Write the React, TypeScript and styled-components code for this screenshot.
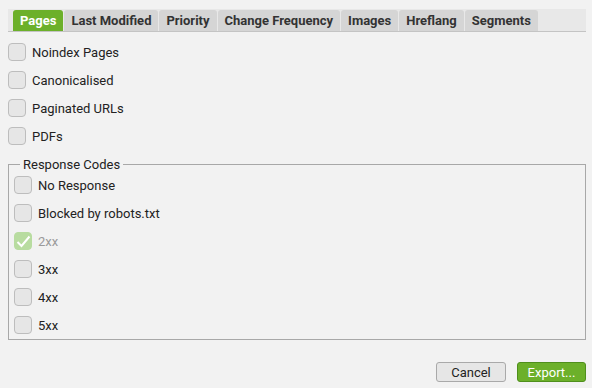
import React from "react";
import styled, { createGlobalStyle } from "styled-components";

const Global = createGlobalStyle`
  html, body { margin: 0; padding: 0; background: #f2f2f2; }
  body { font-family: Roboto, "Liberation Sans", sans-serif; font-size: 13px; color: #222; }
  * { box-sizing: border-box; }
`;

const Page = styled.div`
  width: 592px;
  height: 388px;
  padding: 9px 6px 0 8px;
  display: flex;
  flex-direction: column;
`;

const TabStrip = styled.div`
  height: 24px;
  background: #e8e8e8;
  border-bottom: 1px solid #c4c4c4;
  display: flex;
  align-items: flex-end;
  gap: 1px;
  padding-left: 5px;
`;

const Tab = styled.div<{ $active?: boolean }>`
  height: 21px;
  padding: 0 7px;
  display: flex;
  align-items: center;
  font-weight: 700;
  font-size: 13px;
  border-radius: 3px 3px 0 0;
  background: ${(p) => (p.$active ? "#6cb02a" : "#d5d5d5")};
  color: ${(p) => (p.$active ? "#fff" : "#333")};
`;

const List = styled.div`
  display: flex;
  flex-direction: column;
  padding-top: 6px;
`;

const Row = styled.label<{ $disabled?: boolean }>`
  height: 28px;
  display: flex;
  align-items: center;
  gap: 6px;
  font-size: 13px;
  color: ${(p) => (p.$disabled ? "#9a9a9a" : "#222")};
`;

const Box = styled.span<{ $checked?: boolean }>`
  width: 18px;
  height: 18px;
  border-radius: 4px;
  border: 1px solid ${(p) => (p.$checked ? "#b8dca0" : "#bdbdbd")};
  background: ${(p) => (p.$checked ? "#b8dca0" : "#e6e6e6")};
  display: flex;
  align-items: center;
  justify-content: center;
  flex: none;
`;

const Group = styled.fieldset`
  margin: 8px 0 0 0;
  padding: 0 0 0 5px;
  border: 1px solid #a8a8a8;
  display: flex;
  flex-direction: column;
  width: 578px;
`;

const Legend = styled.legend`
  margin-left: 6px;
  padding: 0 3px;
  line-height: 13px;
  font-size: 13px;
  color: #222;
`;

const Footer = styled.div`
  margin-top: auto;
  height: 49px;
  display: flex;
  justify-content: flex-end;
  align-items: flex-start;
  padding-top: 22px;
  gap: 11px;
`;

const Button = styled.button<{ $primary?: boolean }>`
  height: 20px;
  padding: 0;
  font-family: Roboto, "Liberation Sans", sans-serif;
  font-size: 13px;
  border-radius: 3px;
  border: 1px solid ${(p) => (p.$primary ? "#4f8f1c" : "#a9a9a9")};
  background: ${(p) => (p.$primary ? "#6cb02a" : "#e6e6e6")};
  color: ${(p) => (p.$primary ? "#fff" : "#222")};
  width: ${(p) => (p.$primary ? "69px" : "70px")};
`;

const Check = () => (
  <svg width="15" height="13" viewBox="0 0 15 13">
    <path d="M1.5 7 L5.5 11 L13.5 1.5" fill="none" stroke="#fff" strokeWidth="2" />
  </svg>
);

const CB = ({ label, checked, disabled }: { label: string; checked?: boolean; disabled?: boolean }) => (
  <Row $disabled={disabled}>
    <Box $checked={checked}>{checked && <Check />}</Box>
    {label}
  </Row>
);

const tabs = ["Pages", "Last Modified", "Priority", "Change Frequency", "Images", "Hreflang", "Segments"];

export default function App() {
  return (
    <>
      <Global />
      <Page>
        <TabStrip>
          {tabs.map((t, i) => (
            <Tab key={t} $active={i === 0}>{t}</Tab>
          ))}
        </TabStrip>
        <List>
          <CB label="Noindex Pages" />
          <CB label="Canonicalised" />
          <CB label="Paginated URLs" />
          <CB label="PDFs" />
        </List>
        <Group>
          <Legend>Response Codes</Legend>
          <CB label="No Response" />
          <CB label="Blocked by robots.txt" />
          <CB label="2xx" checked disabled />
          <CB label="3xx" />
          <CB label="4xx" />
          <CB label="5xx" />
        </Group>
        <Footer>
          <Button>Cancel</Button>
          <Button $primary>Export...</Button>
        </Footer>
      </Page>
    </>
  );
}
